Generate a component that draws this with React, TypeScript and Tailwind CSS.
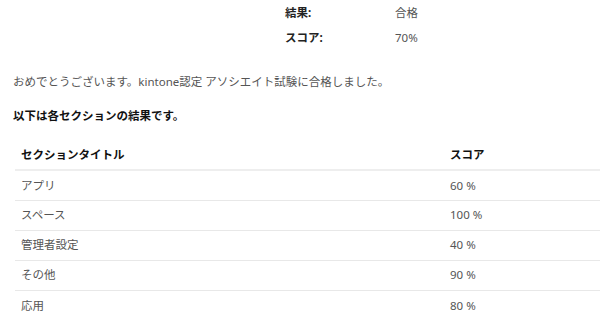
import React from 'react';

const rows = [
  { title: 'アプリ', score: '60 %' },
  { title: 'スペース', score: '100 %' },
  { title: '管理者設定', score: '40 %' },
  { title: 'その他', score: '90 %' },
  { title: '応用', score: '80 %' },
];

export default function App() {
  return (
    <div className="w-[600px] h-[327px] bg-white overflow-hidden text-[11.5px] text-[#555] font-['Noto_Sans','Noto_Sans_CJK_JP',sans-serif]">
      {/* Summary */}
      <div className="pl-[285px]">
        <div className="flex h-[25px] items-center">
          <span className="w-[110px] font-bold text-[#222]">結果:</span>
          <span>合格</span>
        </div>
        <div className="flex h-[25px] items-center">
          <span className="w-[110px] font-bold text-[#222]">スコア:</span>
          <span>70%</span>
        </div>
      </div>

      <p className="pl-[13px] mt-[22px] h-[20px] leading-[20px]">
        おめでとうございます。kintone認定 アソシエイト試験に合格しました。
      </p>
      <p className="pl-[13px] mt-[14px] h-[20px] leading-[20px] font-bold text-[#111]">
        以下は各セクションの結果です。
      </p>

      {/* Section table */}
      <table className="ml-[15px] mt-[14px] w-[585px] border-collapse">
        <thead>
          <tr className="border-b-2 border-[#eeeeee]">
            <th className="h-[30px] pl-[6px] text-left font-bold text-[#111]">セクションタイトル</th>
            <th className="w-[150px] text-left font-bold text-[#111]">スコア</th>
          </tr>
        </thead>
        <tbody>
          {rows.map((r, i) => (
            <tr key={r.title} className={i < rows.length - 1 ? 'border-b border-[#e8e8e8]' : ''}>
              <td className="h-[30px] pl-[6px]">{r.title}</td>
              <td>{r.score}</td>
            </tr>
          ))}
        </tbody>
      </table>
    </div>
  );
}
